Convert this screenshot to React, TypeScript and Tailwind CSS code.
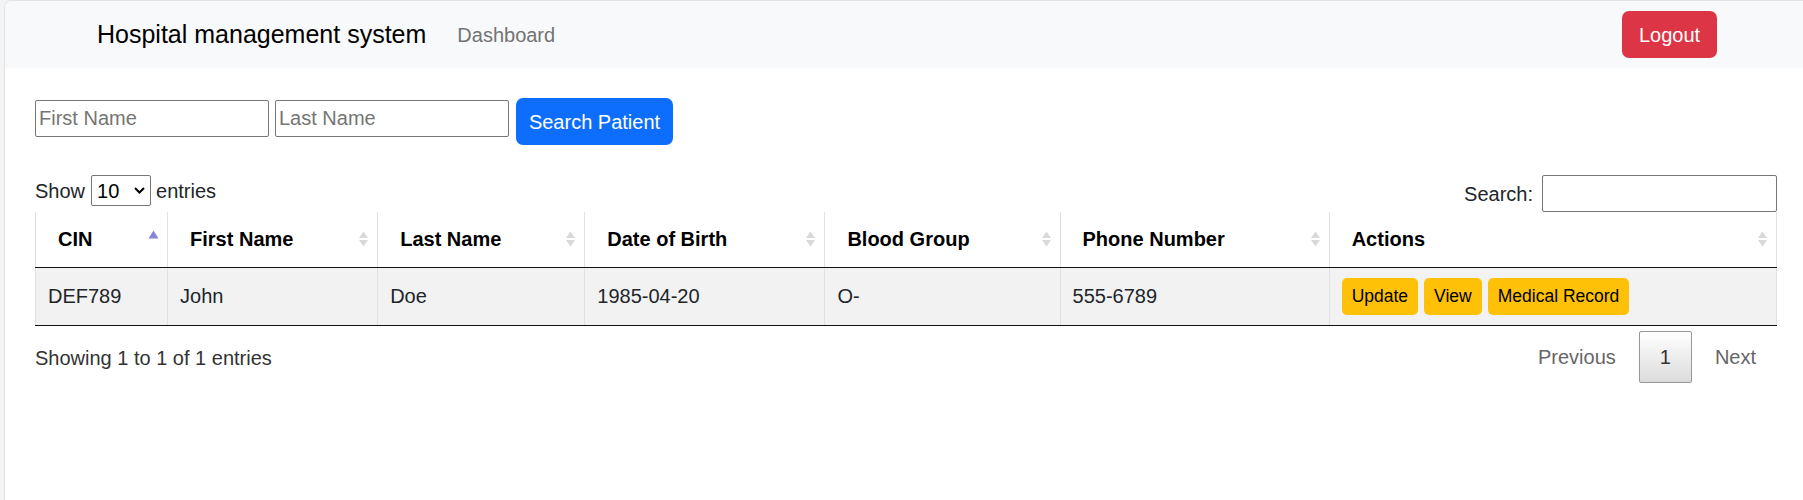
import React from 'react';

const columns = [
  { label: 'CIN', width: 'w-[132px]', sort: 'asc' },
  { label: 'First Name', width: 'w-[210px]', sort: 'both' },
  { label: 'Last Name', width: 'w-[207px]', sort: 'both' },
  { label: 'Date of Birth', width: 'w-[240px]', sort: 'both' },
  { label: 'Blood Group', width: 'w-[235px]', sort: 'both' },
  { label: 'Phone Number', width: 'w-[269px]', sort: 'both' },
  { label: 'Actions', width: 'w-[447px]', sort: 'both' },
];

const patients = [
  { cin: 'DEF789', first: 'John', last: 'Doe', dob: '1985-04-20', blood: 'O-', phone: '555-6789' },
];

const SortIcon = ({ kind }: { kind: string }) =>
  kind === 'asc' ? (
    <svg width="11" height="9" viewBox="0 0 11 9" className="mb-[10px]">
      <path d="M5.5 0.5 L10.5 8.5 L0.5 8.5 Z" fill="#8484dc" />
    </svg>
  ) : (
    <svg width="11" height="16" viewBox="0 0 11 16">
      <path d="M5.5 0.5 L10 7 L1 7 Z" fill="#d9d9d9" />
      <path d="M5.5 15.5 L10 9 L1 9 Z" fill="#d9d9d9" />
    </svg>
  );

const ActionButton = ({ children }: { children: React.ReactNode }) => (
  <button className="h-[37px] rounded-[5px] bg-[#ffc107] px-[10px] text-[17.5px] text-black">{children}</button>
);

export default function App() {
  return (
    <div className="flex min-h-screen bg-[#f4f4f4] font-['Liberation_Sans',Arial,sans-serif] text-[20px] text-[#212529]">
      <div className="ml-[4px] min-h-screen flex-1 overflow-hidden rounded-tl-[7px] border-l border-t border-[#e2e2e2] bg-white">
        <nav className="flex h-[67px] items-center bg-[#f8f9fa] pl-[92px] pr-[86px]">
          <span className="text-[25px] text-black">Hospital management system</span>
          <a className="ml-[31px] text-[20px] text-[#737373]">Dashboard</a>
          <button className="ml-auto h-[47px] w-[95px] rounded-[7px] bg-[#dc3545] text-[20px] text-white">Logout</button>
        </nav>

        <main className="pl-[30px] pr-[26px] pt-[30px]">
          <form className="flex items-start" onSubmit={(e) => e.preventDefault()}>
            <input
              placeholder="First Name"
              className="mt-[2px] h-[37px] w-[234px] rounded-[2px] border border-[#767676] px-[3px] text-[20px] placeholder:text-[#757575]"
            />
            <input
              placeholder="Last Name"
              className="ml-[6px] mt-[2px] h-[37px] w-[234px] rounded-[2px] border border-[#767676] px-[3px] text-[20px] placeholder:text-[#757575]"
            />
            <button className="ml-[7px] h-[47px] w-[157px] rounded-[7px] bg-[#0d6efd] text-[20px] text-white">Search Patient</button>
          </form>

          <div className="mt-[30px] flex items-start justify-between">
            <div className="flex h-[31px] items-center">
              <span>Show</span>
              <div className="ml-[6px] flex h-[31px] w-[60px] items-center justify-between rounded-[2px] border border-[#767676] pl-[5px] pr-[5px]">
                <span className="text-black">10</span>
                <svg width="11" height="7" viewBox="0 0 11 7">
                  <path d="M1 1 L5.5 5.5 L10 1" stroke="#000" strokeWidth="2" fill="none" />
                </svg>
              </div>
              <span className="ml-[5px]">entries</span>
            </div>
            <div className="flex h-[37px] items-center">
              <span>Search:</span>
              <input className="ml-[9px] h-[37px] w-[235px] rounded-[2px] border border-[#767676]" />
            </div>
          </div>

          <table className="w-full table-fixed border-collapse">
            <thead>
              <tr>
                {columns.map((c) => (
                  <th
                    key={c.label}
                    className={`${c.width} h-[55px] border-x border-b border-x-[#dee2e6] border-b-[#111] pl-[22px] pr-[8px] text-left font-bold text-black`}
                  >
                    <div className="flex items-center justify-between">
                      <span>{c.label}</span>
                      <SortIcon kind={c.sort} />
                    </div>
                  </th>
                ))}
              </tr>
            </thead>
            <tbody>
              {patients.map((p) => (
                <tr key={p.cin} className="bg-[#f2f2f2]">
                  <td className="h-[58px] border-x border-b border-x-[#dee2e6] border-b-[#111] pl-[12px]">{p.cin}</td>
                  <td className="border-x border-b border-x-[#dee2e6] border-b-[#111] pl-[12px]">{p.first}</td>
                  <td className="border-x border-b border-x-[#dee2e6] border-b-[#111] pl-[12px]">{p.last}</td>
                  <td className="border-x border-b border-x-[#dee2e6] border-b-[#111] pl-[12px]">{p.dob}</td>
                  <td className="border-x border-b border-x-[#dee2e6] border-b-[#111] pl-[12px]">{p.blood}</td>
                  <td className="border-x border-b border-x-[#dee2e6] border-b-[#111] pl-[12px]">{p.phone}</td>
                  <td className="border-x border-b border-x-[#dee2e6] border-b-[#111] pl-[12px]">
                    <div className="flex gap-[6px]">
                      <ActionButton>Update</ActionButton>
                      <ActionButton>View</ActionButton>
                      <ActionButton>Medical Record</ActionButton>
                    </div>
                  </td>
                </tr>
              ))}
            </tbody>
          </table>

          <div className="flex items-start justify-between">
            <div className="pt-[17px] text-[#333]">Showing 1 to 1 of 1 entries</div>
            <div className="flex items-center pt-[5px]">
              <span className="border border-transparent px-[20px] py-[10px] text-[#666]">Previous</span>
              <span className="ml-[2px] rounded-[2px] border border-[#979797] bg-gradient-to-b from-white to-[#dcdcdc] px-[20px] py-[10px] text-[#333]">
                1
              </span>
              <span className="ml-[2px] border border-transparent px-[20px] py-[10px] text-[#666]">Next</span>
            </div>
          </div>
        </main>
      </div>
    </div>
  );
}
